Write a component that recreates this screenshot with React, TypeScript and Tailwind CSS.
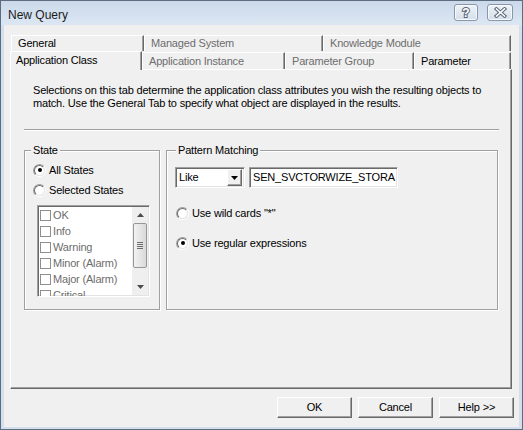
const sunken =
  "border border-t-[#a0a0a0] border-l-[#a0a0a0] border-r-white border-b-white shadow-[inset_1px_1px_0_#696969,inset_-1px_-1px_0_#e3e3e3]";
const raised =
  "border border-t-white border-l-white border-r-[#696969] border-b-[#696969] shadow-[inset_-1px_-1px_0_#a0a0a0]";

function Tab({ label, w, h, disabled }: { label: string; w: string; h: string; disabled?: boolean }) {
  return (
    <div
      className={`${w} ${h} flex items-center whitespace-nowrap border-t border-l border-r border-t-white border-l-white border-r-[#696969] pl-[6px] shadow-[inset_-1px_0_0_#a0a0a0] ${
        disabled ? "text-[#6d6d6d]" : "text-black"
      }`}
    >
      {label}
    </div>
  );
}

function Radio({ checked }: { checked?: boolean }) {
  return (
    <span className="flex h-[13px] w-[13px] shrink-0 rounded-full border border-t-[#a0a0a0] border-l-[#a0a0a0] border-r-white border-b-white">
      <span className="flex flex-1 items-center justify-center rounded-full border border-t-[#696969] border-l-[#696969] border-r-[#e3e3e3] border-b-[#e3e3e3] bg-white">
        {checked && <span className="h-[4px] w-[4px] rounded-full bg-black" />}
      </span>
    </span>
  );
}

function RadioRow({ label, checked, className }: { label: string; checked?: boolean; className: string }) {
  return (
    <div className={`flex h-[20px] items-center gap-[3px] whitespace-nowrap ${className}`}>
      <Radio checked={checked} />
      <span>{label}</span>
    </div>
  );
}

const states = ["OK", "Info", "Warning", "Minor (Alarm)", "Major (Alarm)", "Critical"];

export default function App() {
  return (
    <div className="flex h-[430px] w-[523px] flex-col border border-[#5d6d80] bg-[#d3dfec] font-['Liberation_Sans',Arial,sans-serif] text-[11px] tracking-[-0.18px] text-black">
      {/* title bar */}
      <div className="flex h-[24px] shrink-0 items-start bg-linear-to-b from-[#cbd9ea] to-[#dce7f3] pl-[7px] pr-[9px]">
        <span className="mt-[5px] text-[12px] tracking-normal text-[#1b1b1b]">New Query</span>
        <div className="ml-auto mt-[3px] flex gap-[9px]">
          <div className="flex h-[17px] w-[24px] items-center justify-center rounded-[3px] border border-[#8796a9] bg-linear-to-b from-[#eef2f7] to-[#d4deea] shadow-[inset_0_0_0_1px_#f7f9fc]">
            <span className="text-[12px] font-bold leading-none tracking-normal text-white [-webkit-text-stroke:2px_#5b6673] [paint-order:stroke_fill]">?</span>
          </div>
          <div className="flex h-[17px] w-[26px] items-center justify-center rounded-[3px] border border-[#8796a9] bg-linear-to-b from-[#eef2f7] to-[#d4deea] shadow-[inset_0_0_0_1px_#f7f9fc]">
            <svg width="13" height="11" viewBox="0 0 13 11">
              <path d="M2.5 2 L10.5 9 M10.5 2 L2.5 9" stroke="#5b6673" strokeWidth="3.6" strokeLinecap="square" />
              <path d="M2.5 2 L10.5 9 M10.5 2 L2.5 9" stroke="#ffffff" strokeWidth="1.6" strokeLinecap="square" />
            </svg>
          </div>
        </div>
      </div>

      {/* body */}
      <div className="mx-[3px] mb-[2px] flex flex-1 flex-col bg-[#f0f0f0] pl-[6px] pt-[10px]">
        {/* tab rows */}
        <div className="flex h-[16px] pl-[1px]">
          <Tab label="General" w="w-[133px]" h="h-[16px]" />
          <Tab label="Managed System" w="w-[179px]" h="h-[16px]" disabled />
          <Tab label="Knowledge Module" w="w-[188px]" h="h-[16px]" disabled />
        </div>
        <div className="flex h-[18px] items-end">
          <div className="relative z-10 -mb-px flex h-[19px] w-[132px] items-center whitespace-nowrap border-t border-l border-r border-t-white border-l-white border-r-[#696969] bg-[#f0f0f0] pl-[5px] pb-[1px] shadow-[inset_-1px_0_0_#a0a0a0]">
            Application Class
          </div>
          <Tab label="Application Instance" w="w-[143px]" h="h-[17px]" disabled />
          <Tab label="Parameter Group" w="w-[129px]" h="h-[17px]" disabled />
          <Tab label="Parameter" w="w-[97px]" h="h-[17px]" />
        </div>

        {/* tab panel */}
        <div className="flex h-[320px] w-[502px] flex-col border border-t-white border-l-white border-r-[#696969] border-b-[#696969] shadow-[inset_-1px_-1px_0_#a0a0a0]">
          <p className="ml-[22px] mt-[14px] leading-[13px]">
            Selections on this tab determine the application class attributes you wish the resulting objects to
            <br />
            match. Use the General Tab to specify what object are displayed in the results.
          </p>
          <div className="ml-[13px] mt-[19px] h-[2px] w-[475px] border-t border-b border-t-[#a0a0a0] border-b-white" />

          <div className="ml-[13px] mt-[13px] flex gap-[6px]">
            {/* State */}
            <fieldset className="h-[166px] w-[136px] border border-[#a0a0a0] shadow-[inset_1px_1px_0_#fff,1px_1px_0_#fff]">
              <legend className="ml-[6px] bg-[#f0f0f0] px-[2px] leading-[12px]">State</legend>
              <RadioRow label="All States" checked className="mt-[4px] pl-[8px]" />
              <RadioRow label="Selected States" className="pl-[8px]" />
              <div className={`ml-[12px] mt-[5px] flex h-[92px] w-[113px] overflow-hidden bg-white ${sunken}`}>
                <div className="flex-1 overflow-hidden pl-[2px] pt-px text-[#6d6d6d]">
                  {states.map((s) => (
                    <div key={s} className="flex h-[16px] items-center gap-[2px] whitespace-nowrap">
                      <span className="h-[11px] w-[11px] shrink-0 border border-[#8f8f8f] bg-white" />
                      <span>{s}</span>
                    </div>
                  ))}
                </div>
                <div className="my-px mr-px flex w-[16px] flex-col items-center bg-[#efefef]">
                  <div className="flex h-[16px] w-full items-center justify-center">
                    <svg width="7" height="4" viewBox="0 0 7 4">
                      <path d="M3.5 0 L7 4 L0 4 Z" fill="#4a4a4a" />
                    </svg>
                  </div>
                  <div className="flex h-[45px] w-[14px] flex-col items-center justify-center gap-[1px] rounded-[2px] border border-[#979797] bg-linear-to-r from-[#f2f2f2] to-[#d9d9d9]">
                    <span className="h-px w-[6px] bg-[#6e6e6e]" />
                    <span className="h-px w-[6px] bg-[#6e6e6e]" />
                    <span className="h-px w-[6px] bg-[#6e6e6e]" />
                    <span className="h-px w-[6px] bg-[#6e6e6e]" />
                  </div>
                  <div className="mt-auto flex h-[16px] w-full items-center justify-center">
                    <svg width="7" height="4" viewBox="0 0 7 4">
                      <path d="M0 0 L7 0 L3.5 4 Z" fill="#4a4a4a" />
                    </svg>
                  </div>
                </div>
              </div>
            </fieldset>

            {/* Pattern Matching */}
            <fieldset className="h-[166px] w-[332px] border border-[#a0a0a0] shadow-[inset_1px_1px_0_#fff,1px_1px_0_#fff]">
              <legend className="ml-[9px] bg-[#f0f0f0] px-[2px] leading-[12px]">Pattern Matching</legend>
              <div className="ml-[8px] mt-[11px] flex gap-[4px]">
                <div className={`flex h-[21px] w-[70px] items-center bg-white p-[2px] ${sunken}`}>
                  <span className="pl-[1px]">Like</span>
                  <div className={`ml-auto flex h-[17px] w-[15px] items-center justify-center bg-[#f0f0f0] ${raised}`}>
                    <svg width="7" height="4" viewBox="0 0 7 4">
                      <path d="M0 0 L7 0 L3.5 4 Z" fill="#000" />
                    </svg>
                  </div>
                </div>
                <div className={`flex h-[21px] w-[149px] items-center overflow-hidden whitespace-nowrap bg-white pl-[3px] ${sunken}`}>
                  SEN_SVCTORWIZE_STORA
                </div>
              </div>
              <RadioRow label={'Use wild cards "*"'} className="ml-[9px] mt-[15px]" />
              <RadioRow label="Use regular expressions" checked className="ml-[9px] mt-[10px]" />
            </fieldset>
          </div>
        </div>

        {/* buttons */}
        <div className="mt-[8px] flex justify-end gap-[6px] pr-[5px]">
          {["OK", "Cancel", "Help >>"].map((b) => (
            <button key={b} className={`flex h-[21px] w-[75px] items-center justify-center bg-[#f0f0f0] ${raised}`}>
              {b}
            </button>
          ))}
        </div>
      </div>
    </div>
  );
}
